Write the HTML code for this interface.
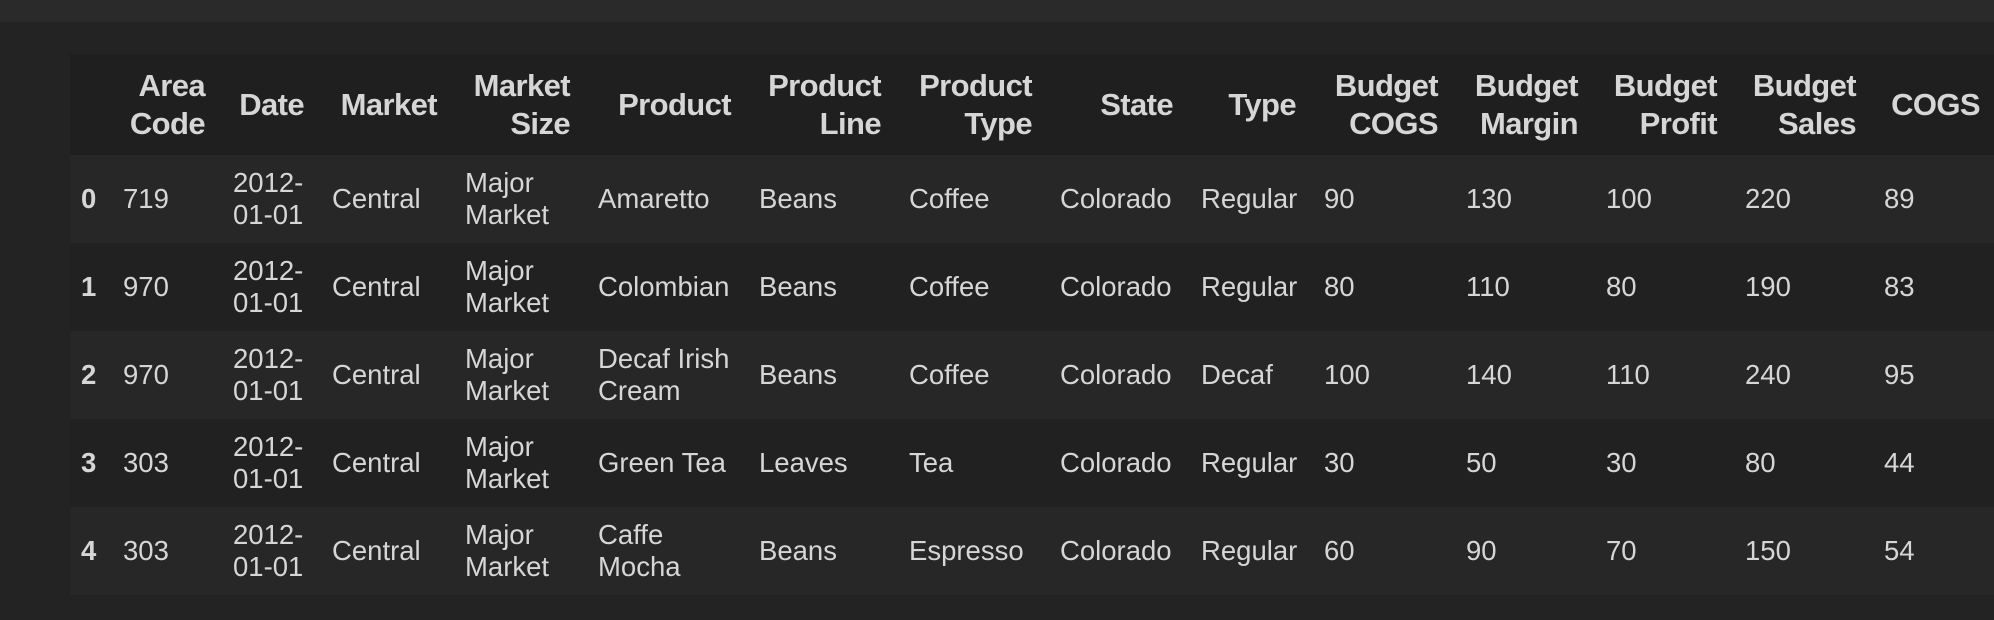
<!DOCTYPE html>
<html><head><meta charset="utf-8"><style>
html,body{margin:0;padding:0;width:1994px;height:620px;overflow:hidden;background:#232323;}
.top{height:22px;background:#2a2a2a;}
table{position:absolute;left:70px;top:54px;border-collapse:collapse;table-layout:fixed;width:1924px;font-family:"Liberation Sans",Arial,sans-serif;color:#d6d6d6;}
th,td{padding:0 14px;white-space:nowrap;overflow:visible;vertical-align:middle;}
th{font-weight:bold;font-size:31px;line-height:38px;text-align:right;height:101px;background:#1f1f1f;letter-spacing:-0.6px;}
td{font-size:27.5px;line-height:32px;text-align:left;height:88px;}
tr.a td{background:#272727;}
tr.b td{background:#212121;}
td.i{font-weight:bold;padding-left:11px;}
</style></head><body>
<div class="top"></div>
<table>
<colgroup>
<col style="width:39px"><col style="width:110px"><col style="width:99px"><col style="width:133px"><col style="width:133px"><col style="width:161px"><col style="width:150px"><col style="width:151px"><col style="width:141px"><col style="width:123px"><col style="width:142px"><col style="width:140px"><col style="width:139px"><col style="width:139px"><col style="width:124px">
</colgroup>
<tr><th></th><th>Area<br>Code</th><th>Date</th><th>Market</th><th>Market<br>Size</th><th>Product</th><th>Product<br>Line</th><th>Product<br>Type</th><th>State</th><th>Type</th><th>Budget<br>COGS</th><th>Budget<br>Margin</th><th>Budget<br>Profit</th><th>Budget<br>Sales</th><th>COGS</th></tr>
<tr class="a"><td class="i">0</td><td>719</td><td>2012-<br>01-01</td><td>Central</td><td>Major<br>Market</td><td>Amaretto</td><td>Beans</td><td>Coffee</td><td>Colorado</td><td>Regular</td><td>90</td><td>130</td><td>100</td><td>220</td><td>89</td></tr>
<tr class="b"><td class="i">1</td><td>970</td><td>2012-<br>01-01</td><td>Central</td><td>Major<br>Market</td><td>Colombian</td><td>Beans</td><td>Coffee</td><td>Colorado</td><td>Regular</td><td>80</td><td>110</td><td>80</td><td>190</td><td>83</td></tr>
<tr class="a"><td class="i">2</td><td>970</td><td>2012-<br>01-01</td><td>Central</td><td>Major<br>Market</td><td>Decaf Irish<br>Cream</td><td>Beans</td><td>Coffee</td><td>Colorado</td><td>Decaf</td><td>100</td><td>140</td><td>110</td><td>240</td><td>95</td></tr>
<tr class="b"><td class="i">3</td><td>303</td><td>2012-<br>01-01</td><td>Central</td><td>Major<br>Market</td><td>Green Tea</td><td>Leaves</td><td>Tea</td><td>Colorado</td><td>Regular</td><td>30</td><td>50</td><td>30</td><td>80</td><td>44</td></tr>
<tr class="a"><td class="i">4</td><td>303</td><td>2012-<br>01-01</td><td>Central</td><td>Major<br>Market</td><td>Caffe<br>Mocha</td><td>Beans</td><td>Espresso</td><td>Colorado</td><td>Regular</td><td>60</td><td>90</td><td>70</td><td>150</td><td>54</td></tr>
</table>
</body></html>
